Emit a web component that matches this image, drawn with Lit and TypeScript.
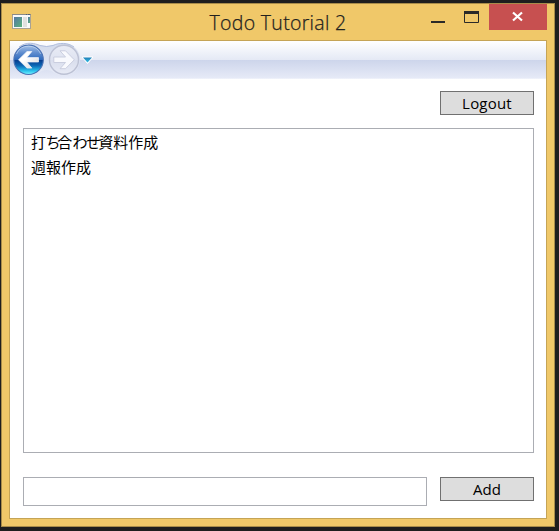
import { LitElement, html, css } from "lit";
import { customElement, property, state } from "lit/decorators.js";

@customElement("title-bar")
class TitleBar extends LitElement {
  @property() heading = "";

  static styles = css`
    :host { display: flex; height: 36px; position: relative; color: #22211e; }
    .app-icon { margin: 9px 0 0 3px; width: 20px; height: 18px; }
    .title {
      position: absolute; left: 0; right: 0; top: 5px; text-align: center;
      font: 350 19.5px/28px "Open Sans", "Noto Sans", sans-serif;
      letter-spacing: 0.3px; white-space: nowrap;
      -webkit-text-stroke: 0.25px #22211e;
    }
    .controls { margin-left: auto; display: flex; height: 26px; }
    .controls svg { display: block; }
    .close { background: #c75050; }
  `;

  render() {
    return html`
      <svg class="app-icon" viewBox="0 0 20 18">
        <defs>
          <linearGradient id="pane" x1="0" y1="0" x2="1" y2="1">
            <stop offset="0" stop-color="#5577a5" /><stop offset="1" stop-color="#5cb37b" />
          </linearGradient>
        </defs>
        <rect x="0.5" y="1.5" width="18" height="14" fill="#fafafa" stroke="#a9a294" />
        <path d="M0 1.5H19" stroke="#8b8b89" />
        <path d="M14 1.5h1M16 1.5h2" stroke="#4f6279" />
        <rect x="2" y="4" width="8" height="10" fill="url(#pane)" />
        <rect x="11" y="4" width="4" height="10" fill="#e2e2e0" />
        <rect x="16" y="4" width="2" height="6" fill="url(#pane)" />
      </svg>
      <div class="title">${this.heading}</div>
      <div class="controls">
        <svg width="66" height="26" viewBox="0 0 66 26">
          <rect x="8" y="17" width="14" height="2" fill="#2a2a28" />
          <path d="M41.5 8V18.5H55.5V8" fill="none" stroke="#2a2a28" />
          <rect x="41" y="7" width="15" height="3" fill="#2a2a28" />
        </svg>
        <svg class="close" width="58" height="26" viewBox="0 0 58 26">
          <path d="M24 8.5L33 16.5M33 8.5L24 16.5" stroke="#fff" stroke-width="2.2" />
        </svg>
      </div>
    `;
  }
}

@customElement("nav-bar")
class NavBar extends LitElement {
  static styles = css`
    :host {
      display: block; height: 38px;
      background: linear-gradient(#fff 0, #e4e9f5 19px, #cdd5eb 19px, #e6eaf7 37px, #f5f7fc 38px);
    }
    svg { display: block; }
  `;

  render() {
    return html`
      <svg width="90" height="37" viewBox="0 0 90 37">
        <defs>
          <linearGradient id="blue" x1="0" y1="0" x2="0" y2="1">
            <stop offset="0" stop-color="#a9c4e8" />
            <stop offset="0.25" stop-color="#628fd0" />
            <stop offset="0.49" stop-color="#2f6bbd" />
            <stop offset="0.51" stop-color="#073b8c" />
            <stop offset="0.7" stop-color="#0c69b6" />
            <stop offset="0.88" stop-color="#2cc5ee" />
            <stop offset="1" stop-color="#7df5ff" />
          </linearGradient>
          <linearGradient id="grey" x1="0" y1="0" x2="0" y2="1">
            <stop offset="0" stop-color="#e9ecf6" />
            <stop offset="0.49" stop-color="#dfe3f0" />
            <stop offset="0.51" stop-color="#d9deed" />
            <stop offset="1" stop-color="#e8ebf6" />
          </linearGradient>
          <linearGradient id="tray" x1="0" y1="0" x2="0" y2="1">
            <stop offset="0" stop-color="#d3dbec" /><stop offset="1" stop-color="#e6eaf6" />
          </linearGradient>
          <linearGradient id="arrow" x1="0" y1="0" x2="1" y2="1">
            <stop offset="0.4" stop-color="#fff" /><stop offset="1" stop-color="#d5d5d8" />
          </linearGradient>
          <linearGradient id="drop" x1="0" y1="0" x2="0" y2="1">
            <stop offset="0" stop-color="#1f7fb8" /><stop offset="1" stop-color="#35bfe5" />
          </linearGradient>
        </defs>
        <path d="M18.500 2.500C27 2.500 29 5 36.500 5S46 2.500 54 2.500C63 2.500 70 9.500 70 18.500S63 34.500 54 34.500C45 34.500 43 29 36.500 29S27 34.500 18.500 34.500Z" fill="url(#tray)" />
        <path d="M9 6C17 0 25 2.500 30 4.500Q36.500 6.500 43 4.500C49 1.500 58 1.500 64 6" fill="none" stroke="#b0bddc" />
        <circle cx="18.600" cy="18.800" r="14.700" fill="url(#blue)" stroke="#4a72b4" stroke-width="1.100" />
        <path d="M6.500 13A13.200 13.200 0 0 1 30.700 13" fill="none" stroke="#dce9f8" stroke-opacity="0.5" />
        <path d="M8.500 18.800L17 10.500H21.800L16.800 16.600H28.500V21H16.800L21.800 27.100H17Z" fill="url(#arrow)" stroke="#f4f6fa" stroke-width="0.700" stroke-linejoin="round" />
        <circle cx="54" cy="18.800" r="14.500" fill="url(#grey)" stroke="#bcc1d4" stroke-width="1.400" />
        <path d="M64.300 18.800L55.500 9.800H50L55.500 16H43.800V21.500H55.500L50 27.700H55.500Z" fill="#f8f9fd" stroke="#c6cbdc" stroke-width="0.900" stroke-linejoin="round" />
        <path d="M72 16H83L77.500 22.500Z" fill="#fff" stroke="#fff" stroke-linejoin="round" />
        <path d="M73 16.500H82L77.500 21.500Z" fill="url(#drop)" />
      </svg>
    `;
  }
}

@customElement("app-root")
class AppRoot extends LitElement {
  @state() private todos = ["打ち合わせ資料作成", "週報作成"];

  static styles = css`
    :host {
      display: block; box-sizing: border-box; width: 559px; height: 531px;
      padding: 3px 4px 4px 1px; background: #1e1e1e; overflow: hidden;
    }
    * { box-sizing: border-box; }
    .window {
      height: 524px; display: flex; flex-direction: column;
      background: #f0c869; border: 1px solid #a88c4a; padding: 0 7px 7px;
    }
    title-bar { flex: none; }
    .client {
      flex: 1; display: flex; flex-direction: column;
      background: #fff; border: 1px solid #c5a456;
    }
    .page {
      flex: 1; display: grid; grid-template-columns: 404px 94px; column-gap: 13px;
      grid-template-rows: 24px 325px 29px; row-gap: 13px;
      padding: 12px 12px 12px 13px;
      font: 400 15px/22px "Open Sans", "Noto Sans", "Noto Sans CJK JP", sans-serif; color: #000;
    }
    .button {
      height: 24px; padding: 0; border: 1px solid #707070; background: #ddd;
      font: inherit; line-height: 23px; text-align: center; color: #000;
    }
    .logout { grid-column: 2; letter-spacing: 0.2px; }
    .list {
      grid-column: 1 / 3; margin: 0; padding: 0 7px; list-style: none;
      border: 1px solid #abadb3;
      font: 15px/25px "Noto Sans CJK JP", sans-serif;
    }
    .item { height: 25px; }
    .kana { letter-spacing: -1.9px; font-feature-settings: "palt"; }
    .entry {
      width: 404px; height: 29px; margin-top: 11px; padding: 0 6px;
      border: 1px solid #abadb3; background: #fff; font: inherit; outline: none;
    }
    .add { margin-top: 11px; }
  `;

  /* Hiragana is set narrower than kanji, as in a proportional UI face. */
  private label(text: string) {
    return text
      .split(/([\u3040-\u309f]+)/)
      .map((part, i) => (i % 2 ? html`<span class="kana">${part}</span>` : part));
  }

  render() {
    return html`
      <div class="window">
        <title-bar heading="Todo Tutorial 2"></title-bar>
        <div class="client">
          <nav-bar></nav-bar>
          <div class="page">
            <button class="button logout">Logout</button>
            <ul class="list">
              ${this.todos.map((todo) => html`<li class="item">${this.label(todo)}</li>`)}
            </ul>
            <input class="entry" type="text" />
            <button class="button add">Add</button>
          </div>
        </div>
      </div>
    `;
  }
}
